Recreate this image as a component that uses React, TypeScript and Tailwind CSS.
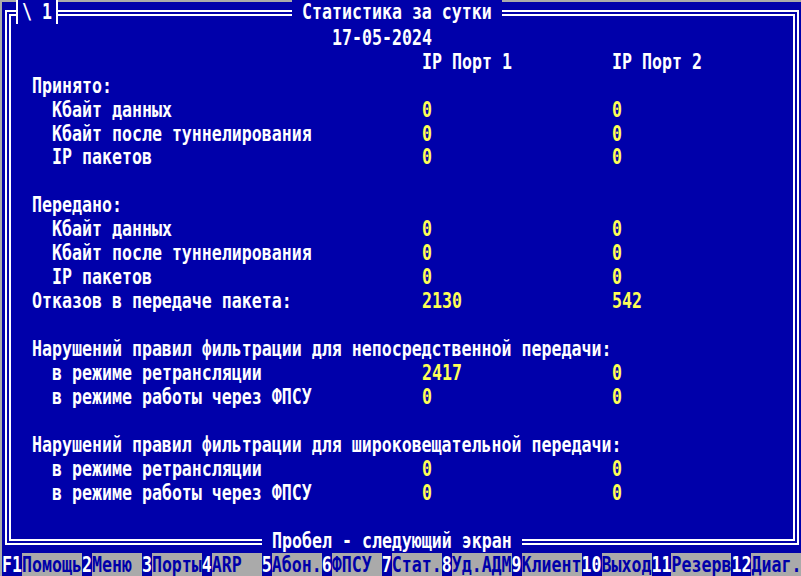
import React from "react";

// text-mode screen: 80 cols x 24 rows, 10x24 px cells, col 0 starts at x=2
type Row = { label?: string; indent?: number; v1?: string; v2?: string; white?: boolean };

const ROWS: Row[] = [
  { v1: "IP Порт 1", v2: "IP Порт 2", white: true },
  { label: "Принято:", indent: 0 },
  { label: "Кбайт данных", indent: 1, v1: "0", v2: "0" },
  { label: "Кбайт после туннелирования", indent: 1, v1: "0", v2: "0" },
  { label: "IP пакетов", indent: 1, v1: "0", v2: "0" },
  {},
  { label: "Передано:", indent: 0 },
  { label: "Кбайт данных", indent: 1, v1: "0", v2: "0" },
  { label: "Кбайт после туннелирования", indent: 1, v1: "0", v2: "0" },
  { label: "IP пакетов", indent: 1, v1: "0", v2: "0" },
  { label: "Отказов в передаче пакета:", indent: 0, v1: "2130", v2: "542" },
  {},
  { label: "Нарушений правил фильтрации для непосредственной передачи:", indent: 0 },
  { label: "в режиме ретрансляции", indent: 1, v1: "2417", v2: "0" },
  { label: "в режиме работы через ФПСУ", indent: 1, v1: "0", v2: "0" },
  {},
  { label: "Нарушений правил фильтрации для широковещательной передачи:", indent: 0 },
  { label: "в режиме ретрансляции", indent: 1, v1: "0", v2: "0" },
  { label: "в режиме работы через ФПСУ", indent: 1, v1: "0", v2: "0" },
];

const KEYS: [string, string][] = [
  ["F1", "Помощь"],
  ["2", "Меню "],
  ["3", "Порты"],
  ["4", "ARP  "],
  ["5", "Абон."],
  ["6", "ФПСУ "],
  ["7", "Стат."],
  ["8", "Уд.АДМ"],
  ["9", "Клиент"],
  ["10", "Выход"],
  ["11", "Резерв"],
  ["12", "Диаг."],
];

function StatRow({ row }: { row: Row }) {
  const valColor = row.white ? "text-white" : "text-[#ffff55]";
  return (
    <div className="flex h-[24px] items-center whitespace-pre leading-[24px] scale-y-[1.3]">
      <div className={`w-[410px] shrink-0 text-white ${row.indent ? "pl-[40px]" : "pl-[20px]"}`}>
        {row.label ?? ""}
      </div>
      <div className={`w-[190px] shrink-0 ${valColor}`}>{row.v1 ?? ""}</div>
      <div className={valColor}>{row.v2 ?? ""}</div>
    </div>
  );
}

export default function App() {
  return (
    <div className="flex h-[576px] w-[801px] flex-col overflow-hidden bg-[#0000aa] font-['DejaVu_Sans_Mono',monospace] text-[16.6px] font-bold shadow-[inset_2px_2px_0_#aaaaaa]">
      <div className="relative h-[552px] shrink-0">
        <div className="ml-[5px] mt-[10px] h-[535px] w-[794px] overflow-hidden border-[6px] border-double border-white pl-[1px] pt-[10px]">
          <div className="flex h-[24px] items-center whitespace-pre pl-[320px] leading-[24px] text-white scale-y-[1.3]">
            17-05-2024
          </div>
          {ROWS.map((row, i) => (
            <StatRow key={i} row={row} />
          ))}
        </div>

        {/* window number tab over the top border */}
        <div className="absolute left-[16px] top-0 flex h-[24px] w-[42px] items-center whitespace-pre border-x-2 border-white bg-[#0000aa] pl-[4px] leading-[24px] text-white">
          <span className="scale-y-[1.3]">\ 1</span>
        </div>

        <div className="absolute left-[292px] top-0 flex h-[24px] items-center whitespace-pre bg-[#0000aa] leading-[24px] text-white">
          <span className="scale-y-[1.3]"> Статистика за сутки </span>
        </div>

        <div className="absolute left-[262px] top-[528px] flex h-[24px] items-center whitespace-pre bg-[#0000aa] pt-[1px] leading-[24px] text-white">
          <span className="scale-y-[1.3]"> Пробел - следующий экран </span>
        </div>
      </div>

      <div className="flex h-[24px] items-center whitespace-pre pl-[2px] pt-[1px] leading-[24px]">
        {KEYS.map(([k, label]) => (
          <React.Fragment key={k}>
            <span className="bg-[#0000aa] text-white">
              <span className="inline-block scale-y-[1.3]">{k}</span>
            </span>
            <span className="bg-[#aaaaaa] text-[#0000aa]">
              <span className="inline-block scale-y-[1.3]">{label}</span>
            </span>
          </React.Fragment>
        ))}
      </div>
    </div>
  );
}
